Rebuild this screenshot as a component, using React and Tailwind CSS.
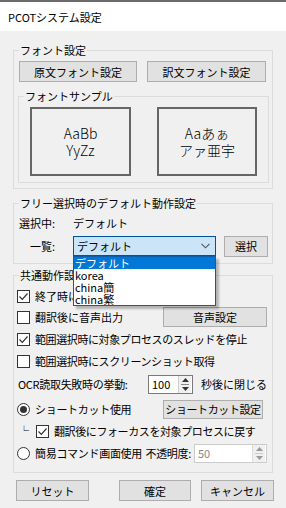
import React from 'react';

const font = { fontFamily: '"Noto Sans CJK JP", "Noto Sans", sans-serif' };

const Btn = ({ children, className = '' }) => (
  <div className={`flex items-center justify-center bg-[#e1e1e1] border border-[#adadad] text-[11px] leading-[12px] whitespace-nowrap text-black shrink-0 ${className}`}>
    {children}
  </div>
);

const Check = ({ checked }) => (
  <div className="w-[13px] h-[13px] border border-[#333] bg-white flex items-center justify-center shrink-0">
    {checked && (
      <svg width="11" height="11" viewBox="0 0 11 11">
        <path d="M1.5 5.5 L4.3 8.3 L9.5 2.5" fill="none" stroke="#333" strokeWidth="1.2" />
      </svg>
    )}
  </div>
);

const Radio = ({ checked }) => (
  <div className="w-[13px] h-[13px] rounded-full border border-[#333] bg-white flex items-center justify-center shrink-0">
    {checked && <div className="w-[7px] h-[7px] rounded-full bg-[#333]" />}
  </div>
);

const Spin = ({ value, disabled, className = '' }) => (
  <div className={`flex items-center border shrink-0 ${disabled ? 'border-[#ccc] text-[#888]' : 'border-[#7a7a7a] text-black'} bg-white ${className}`}>
    <span className="flex-1 pl-[3px] text-[11px] leading-none">{value}</span>
    <div className={`w-[13px] h-full flex flex-col border-l ${disabled ? 'border-[#ddd]' : 'border-[#ccc]'} bg-[#f0f0f0] mr-px`}>
      <div className="flex-1 flex items-center justify-center">
        <svg width="7" height="4" viewBox="0 0 7 4"><path d="M0 4 L3.5 0 L7 4 Z" fill={disabled ? '#999' : '#333'} /></svg>
      </div>
      <div className={`h-px ${disabled ? 'bg-[#ccc]' : 'bg-[#888]'} mx-[2px]`} />
      <div className="flex-1 flex items-center justify-center">
        <svg width="7" height="4" viewBox="0 0 7 4"><path d="M0 0 L3.5 4 L7 0 Z" fill={disabled ? '#999' : '#333'} /></svg>
      </div>
    </div>
  </div>
);

const Group = ({ label, className = '', children }) => (
  <fieldset className={`border border-[#dcdcdc] ${className}`}>
    <legend className="ml-[5px] px-[1px] text-[11px] leading-[16px] whitespace-nowrap text-black">{label}</legend>
    {children}
  </fieldset>
);

export default function App() {
  return (
    <div className="w-[286px] h-[508px] bg-[#f0f0f0] text-black overflow-hidden whitespace-nowrap text-[11px] leading-[12px]" style={font}>
      <div className="h-[31px] bg-white border-t-2 border-[#6b6b6b] flex items-center pl-[8px] text-[11px]">
        PCOTシステム設定
      </div>

      <div className="pl-[13px]">
        <Group label="フォント設定" className="w-[260px] mt-[11px] h-[147px]">
          <div className="flex pl-[5px] gap-[10px] mt-[3px]">
            <Btn className="w-[118px] h-[21px]">原文フォント設定</Btn>
            <Btn className="w-[119px] h-[21px]">訳文フォント設定</Btn>
          </div>
          <Group label="フォントサンプル" className="ml-[4px] w-[251px] mt-[6px] h-[95px]">
            <div className="flex mt-[3px] pl-[11px] gap-[26px]">
              <div className="w-[101px] h-[69px] border-2 border-[#666] flex flex-col items-center justify-center text-[14px] leading-[17px] font-light">
                <span>AaBb</span>
                <span>YyZz</span>
              </div>
              <div className="w-[100px] h-[69px] border-2 border-[#666] flex flex-col items-center justify-center text-[14px] leading-[17px] font-light">
                <span>Aaあぁ</span>
                <span>アァ亜宇</span>
              </div>
            </div>
          </Group>
        </Group>

        <Group label="フリー選択時のデフォルト動作設定" className="w-[260px] mt-[6px] h-[69px]">
          <div className="flex items-center h-[20px] pl-[5px] mt-[2px]">
            <span className="w-[54px]">選択中:</span>
            <span>デフォルト</span>
          </div>
          <div className="flex items-center h-[20px] mt-[3px]">
            <span className="w-[59px] pl-[16px]">一覧:</span>
            <div className="relative">
              <div className="w-[143px] h-[20px] bg-[#cce4f7] border border-[#005499] flex items-center pl-[3px] pr-[5px]">
                <span className="flex-1">デフォルト</span>
                <svg width="9" height="6" viewBox="0 0 9 6"><path d="M0.5 0.8 L4.5 4.8 L8.5 0.8" fill="none" stroke="#555" strokeWidth="1.1" /></svg>
              </div>
              <div className="absolute left-0 top-[20px] w-[143px] h-[50px] bg-white border border-[#0f5da8] z-10 shadow-[3px_3px_2px_rgba(0,0,0,0.25)] text-[11px] leading-[12px] flex flex-col">
                <div className="bg-[#0078d7] text-white pl-[1px] h-[12px] flex items-center">デフォルト</div>
                <div className="pl-[1px] h-[12px] flex items-center">korea</div>
                <div className="pl-[1px] h-[12px] flex items-center">china簡</div>
                <div className="pl-[1px] h-[12px] flex items-center">china繁</div>
              </div>
            </div>
            <Btn className="ml-[8px] w-[44px] h-[21px]">選択</Btn>
          </div>
        </Group>

        <Group label="共通動作設定" className="w-[260px] mt-[3px] h-[206px]">
          <div className="pl-[3px] pr-[5px] flex flex-col">
            <div className="flex items-center h-[20px] gap-[5px] mt-[3px]">
              <Check checked />
              <span>終了時に位置を記憶</span>
            </div>
            <div className="flex items-center h-[20px] gap-[5px] mt-[1px]">
              <Check />
              <span className="flex-1 min-w-0">翻訳後に音声出力</span>
              <Btn className="w-[104px] h-[20px]">音声設定</Btn>
            </div>
            <div className="flex items-center h-[20px] gap-[5px] mt-[2px]">
              <Check checked />
              <span className="tracking-[-0.4px]">範囲選択時に対象プロセスのスレッドを停止</span>
            </div>
            <div className="flex items-center h-[20px] gap-[5px] mt-[2px]">
              <Check />
              <span className="tracking-[-0.4px]">範囲選択時にスクリーンショット取得</span>
            </div>
            <div className="flex items-center h-[20px] mt-[3px]">
              <span className="w-[131px] pl-[1px] tracking-[-0.3px]">OCR読取失敗時の挙動:</span>
              <Spin value="100" className="w-[45px] h-[19px]" />
              <span className="ml-[8px]">秒後に閉じる</span>
            </div>
            <div className="flex items-center h-[20px] gap-[5px] mt-[5px]">
              <Radio checked />
              <span className="flex-1 min-w-0 tracking-[-0.3px]">ショートカット使用</span>
              <Btn className="w-[100px] h-[19px] mr-[4px] tracking-[-0.4px]">ショートカット設定</Btn>
            </div>
            <div className="flex items-center h-[20px] mt-[2px]">
              <span className="w-[19px] pl-[2px] text-[10px]">└</span>
              <Check checked />
              <span className="ml-[5px] tracking-[-0.4px]">翻訳後にフォーカスを対象プロセスに戻す</span>
            </div>
            <div className="flex items-center h-[20px] mt-[2px]">
              <Radio />
              <span className="ml-[5px] flex-1 min-w-0 tracking-[-0.3px]">簡易コマンド画面使用</span>
              <span className="tracking-[-0.3px]">不透明度:</span>
              <Spin value="50" disabled className="w-[73px] h-[19px] ml-[3px]" />
            </div>
          </div>
        </Group>
      </div>

      <div className="flex pl-[16px] mt-[7px]">
        <Btn className="w-[73px] h-[21px]">リセット</Btn>
        <Btn className="w-[72px] h-[21px] ml-[30px]">確定</Btn>
        <Btn className="w-[73px] h-[21px] ml-[10px]">キャンセル</Btn>
      </div>
    </div>
  );
}
